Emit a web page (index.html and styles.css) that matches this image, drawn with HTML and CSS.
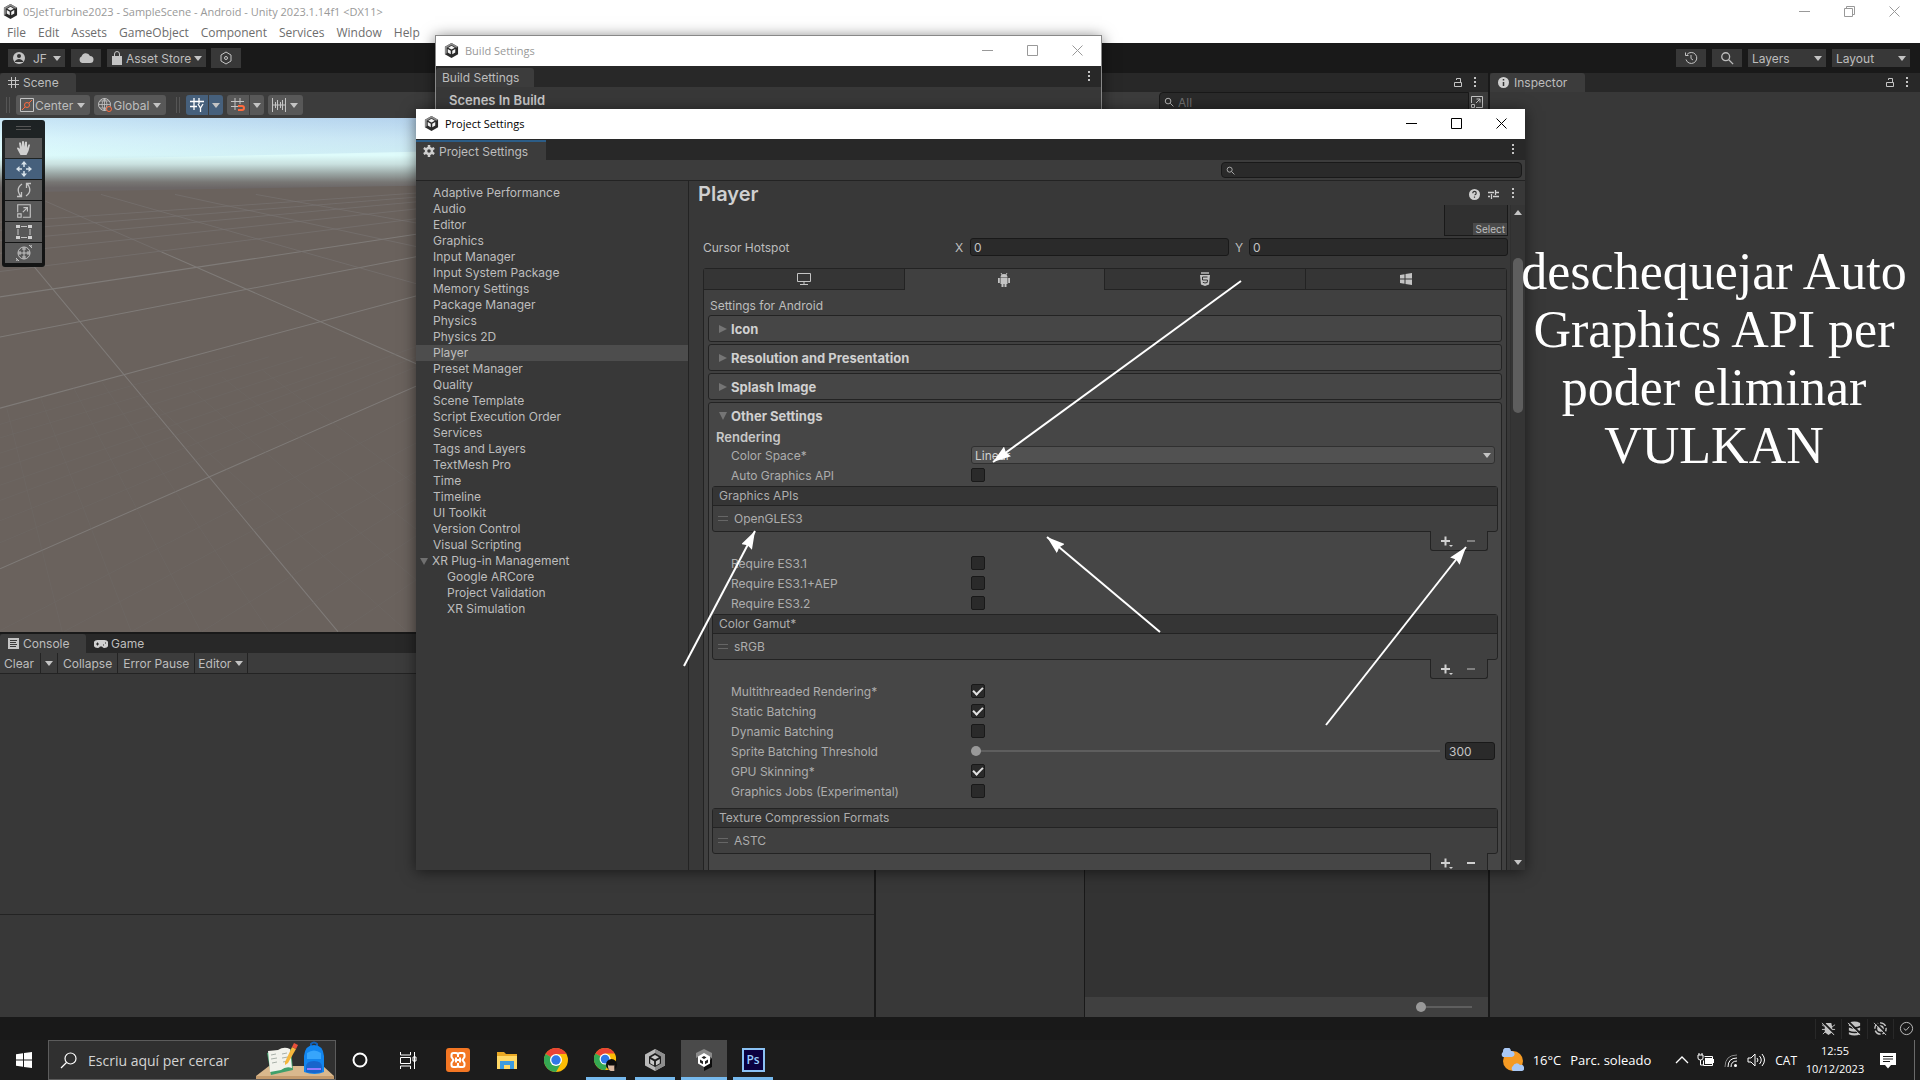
FILE: index.html
```html
<!DOCTYPE html>
<html lang="ca">

<head>
	<meta charset="UTF-8">
	<meta name="viewport" content="width=device-width, initial-scale=1.0">
	<title>05JetTurbine2023 - SampleScene - Android - Unity</title>
	<link rel="stylesheet" href="styles.css">
</head>

<body>

	<!-- Shared icons -->
	<svg class="sprite" aria-hidden="true">
		<symbol id="i-unity" viewBox="0 0 16 16">
			<path d="M8 0l7 4v8l-7 4-7-4V4z" fill="#2a2a2a" />
			<path d="M8 0l7 4-2 1-5-3-5 3v6l-2 1V4z" fill="#8b8b8b" />
			<path d="M8 3l3.5 2L8 7 4.500 5zM4 6.500l3.200 1.800v3.700L4 10zM12 6.500L8.800 8.300v3.700L12 10z" fill="#f4f4f4" />
		</symbol>
		<symbol id="i-cube" viewBox="0 0 24 24">
			<path d="M12 1l10 5.500v11L12 23 2 17.500v-11z" fill="#b9b9b9" />
			<path d="M12 1l10 5.500v11L12 23z" fill="#8d8d8d" />
			<path d="M12 5l6 3.500v7L12 19l-6-3.500v-7z" fill="#1c1c1c" />
			<path d="M12 7l4 2.300-4 2.300-4-2.300zM7.200 11l3.900 2.200v4.300l-3.900-2.200zM16.800 11l-3.900 2.200v4.300l3.900-2.200z" fill="#c9c9c9" />
		</symbol>
		<symbol id="i-cube-light" viewBox="0 0 24 24">
			<path d="M12 1l8 4v5l-8-4-8 4V5z" fill="#8a8a8a" />
			<path d="M20 10v9l-8 4v-4z" fill="#0d0d0d" />
			<path d="M12 5l6 3.500v7L12 19l-6-3.500v-7z" fill="#fff" />
			<path d="M12 8l2.500 1.500L12 11 9.500 9.500zM8 11.500l3 1.700v3L8 14.500zM16 11.500l-3 1.700v3l3-1.700z" fill="#222" />
		</symbol>
		<symbol id="i-dots" viewBox="0 0 4 12">
			<path d="M1 0h2v2H1zM1 4h2v2H1zM1 8h2v2H1z" fill="#c4c4c4" />
		</symbol>
		<symbol id="i-lock" viewBox="0 0 10 12">
			<path d="M1.500 5.500h7v4h-7zM7.500 5V1.500h-4V3" fill="none" stroke="#c4c4c4" />
		</symbol>
		<symbol id="i-search" viewBox="0 0 16 16">
			<path d="M11 6.500a4.500 4.500 0 1 1-9 0 4.500 4.500 0 0 1 9 0zM10 10l5 5" fill="none" stroke="currentColor" stroke-width="1.500" />
		</symbol>
		<symbol id="i-open" viewBox="0 0 14 14">
			<path d="M1.500 8V1.500h11v11H6M1.500 9.500h3v3h-3zM6 8l4-4M6.500 4H10v3.500" fill="none" stroke="#c4c4c4" />
		</symbol>
		<symbol id="i-add" viewBox="0 0 14 14">
			<path d="M2 7h9M6.500 2.500v9" stroke="#d0d0d0" stroke-width="2" />
			<path d="M10 11h4l-2 2z" fill="#d0d0d0" />
		</symbol>
		<symbol id="i-chrome" viewBox="0 0 24 24">
			<circle cx="12" cy="12" r="12" fill="#fbbc05" />
			<path d="M12 12L1.600 6A12 12 0 0 1 22.400 6H12z" fill="#ea4335" />
			<path d="M1.600 6A12 12 0 0 0 12 24l5.200-9L12 12z" fill="#34a853" />
			<circle cx="12" cy="12" r="6" fill="#fff" />
			<circle cx="12" cy="12" r="4.700" fill="#3078e8" />
		</symbol>
		<symbol id="i-min" viewBox="0 0 11 11">
			<path d="M0 5.500h11" fill="none" stroke="currentColor" />
		</symbol>
		<symbol id="i-max" viewBox="0 0 11 11">
			<path d="M.5 .5h10v10H.5z" fill="none" stroke="currentColor" />
		</symbol>
		<symbol id="i-restore" viewBox="0 0 11 11">
			<path d="M.5 2.500h8v8h-8zM2.500 2.500v-2h8v8h-2" fill="none" stroke="currentColor" />
		</symbol>
		<symbol id="i-close" viewBox="0 0 11 11">
			<path d="M.5 .5l10 10M10.500 .5l-10 10" fill="none" stroke="currentColor" />
		</symbol>
	</svg>

	<div class="desktop">

		<header class="app-title">
			<svg class="icon-16"><use href="#i-unity" /></svg>
			<span class="grow">05JetTurbine2023 - SampleScene - Android - Unity 2023.1.14f1 &lt;DX11&gt;</span>
			<div class="win-buttons">
				<button aria-label="Minimize"><svg><use href="#i-min" /></svg></button>
				<button aria-label="Restore"><svg><use href="#i-restore" /></svg></button>
				<button aria-label="Close"><svg><use href="#i-close" /></svg></button>
			</div>
		</header>
		<nav class="app-menu">
			<button>File</button>
			<button>Edit</button>
			<button>Assets</button>
			<button>GameObject</button>
			<button>Component</button>
			<button>Services</button>
			<button>Window</button>
			<button>Help</button>
		</nav>

		<div class="main-toolbar">
			<button class="tool"><svg class="icon-14" viewBox="0 0 14 14"><circle cx="7" cy="7" r="6" fill="#c4c4c4" /><circle cx="7" cy="5" r="2" fill="#333" /><path d="M3 10q4-4 8 0v1H3z" fill="#333" /></svg><span class="account">JF</span><i class="caret"></i></button>
			<button class="tool cloud" aria-label="Cloud"><svg width="16" height="12" viewBox="0 0 16 12"><path d="M4 11a3.500 3.500 0 0 1-.5-6.500A4.500 4.500 0 0 1 12 4a3.500 3.500 0 0 1 0 7z" fill="#c4c4c4" /></svg></button>
			<button class="tool store"><svg width="12" height="14" viewBox="0 0 12 14"><path d="M1 5h10v9H1z" fill="#c4c4c4" /><path d="M3.500 6V3a2.500 2.500 0 0 1 5 0v3" fill="none" stroke="#c4c4c4" /></svg>Asset Store<i class="caret"></i></button>
			<button class="tool version" aria-label="Version control"><svg class="icon-14" viewBox="0 0 14 14"><path d="M7 1l5 3v6l-5 3-5-3V4z" fill="none" stroke="#c4c4c4" /><circle cx="7" cy="7" r="1.500" fill="none" stroke="#c4c4c4" /></svg></button>
			<span class="grow"></span>
			<button class="tool square" aria-label="Undo history"><svg class="icon-14" viewBox="0 0 14 14"><path d="M3 3.500a5.500 5.500 0 1 1-1 5M1.500 1.500v3h3M7 4v3.500l2 1.500" fill="none" stroke="#c4c4c4" /></svg></button>
			<button class="tool square" aria-label="Search"><svg class="icon-14"><use href="#i-search" /></svg></button>
			<span class="pick"><select aria-label="Layers"><option>Layers</option></select></span>
			<span class="pick"><select aria-label="Layout"><option>Layout</option></select></span>
		</div>

		<main class="docks">
			<div class="left-docks">
				<section class="dock scene">
					<div class="tabstrip">
						<button class="tab tab-scene"><svg width="11" height="11" viewBox="0 0 11 11"><path d="M3.500 0v11M7.500 0v11M0 3.500h11M0 7.500h11" fill="none" stroke="#c4c4c4" /></svg>Scene</button>
						<span class="grow"></span>
						<svg class="lock"><use href="#i-lock" /></svg>
						<svg class="dots"><use href="#i-dots" /></svg>
					</div>
					<div class="scene-tools">
						<i class="grip"></i>
						<button class="chip"><svg class="icon-14" viewBox="0 0 14 14"><path d="M.5 .5h13v13H.5z" fill="none" stroke="#c4c4c4" /><circle cx="7" cy="7" r="2.500" fill="none" stroke="#ff6b3d" /><path d="M9 5l3-3M5 9l-3 3" stroke="#ff6b3d" /></svg>Center<i class="caret"></i></button>
						<button class="chip"><svg class="icon-14" viewBox="0 0 14 14"><circle cx="6.500" cy="6.500" r="6" fill="none" stroke="#c4c4c4" /><path d="M6.500 .5v12M.5 6.500h12M2 3h9M2 10h6M6.500 .5q-5 6 0 12M6.500 .5q5 6 0 12" fill="none" stroke="#c4c4c4" stroke-width=".8" /><circle cx="11" cy="11" r="2.500" fill="#585858" stroke="#ff6b3d" /></svg>Global<i class="caret"></i></button>
						<i class="grip second"></i>
						<span class="split on">
							<button aria-label="Grid"><svg class="icon-14" viewBox="0 0 14 14"><path d="M4 0v12M9 0v6M0 3.500h14M0 8.500h7M8 6l2.500 4L13 6M10.500 10v4" fill="none" stroke="#fff" stroke-width="1.300" /></svg></button>
							<button aria-label="Grid options"><i class="caret"></i></button>
						</span>
						<span class="split">
							<button aria-label="Snap"><svg class="icon-14" viewBox="0 0 14 14"><path d="M4 0v12M9 0v6M0 3.500h13M0 8.500h7" fill="none" stroke="#c4c4c4" /><path d="M7 8h4a2 2 0 0 1 0 4H7" fill="none" stroke="#ff6b3d" stroke-width="2" /></svg></button>
							<button aria-label="Snap options"><i class="caret"></i></button>
						</span>
						<button class="chip ruler" aria-label="Increment"><svg class="icon-14" viewBox="0 0 14 14"><path d="M.5 0v14M13.500 0v14M3.500 4v6M5.500 2v10M8.500 4v6M10.500 2v10M0 7h14" fill="none" stroke="#c4c4c4" /></svg><i class="caret"></i></button>
						<span class="grow"></span>
						<label class="scene-search"><svg width="10" height="10"><use href="#i-search" /></svg><input type="text" placeholder="All" aria-label="Search scene"></label>
						<button class="open-search" aria-label="Open in search"><svg class="icon-14"><use href="#i-open" /></svg></button>
					</div>
					<div class="viewport">
						<svg class="ground" viewBox="0 24 1236 1520" preserveAspectRatio="none">
							<defs>
								<linearGradient id="sky" x1="0" y1="0" x2="0" y2="1">
									<stop offset="0" stop-color="#c0dcf3" />
									<stop offset=".28" stop-color="#d9f3fb" />
									<stop offset=".5" stop-color="#dffcfb" />
									<stop offset=".62" stop-color="#c9e0df" />
									<stop offset=".74" stop-color="#9daaa8" />
									<stop offset=".86" stop-color="#787775" />
									<stop offset=".94" stop-color="#6b6666" />
								</linearGradient>
								<linearGradient id="glow" x1="0" y1="0" x2="1" y2="0">
									<stop offset="0" stop-color="#dff" stop-opacity=".3" />
									<stop offset="1" stop-color="#8ab0d8" stop-opacity=".2" />
								</linearGradient>
							</defs>
							<rect y="24" width="1236" height="1520" fill="#6a625d" />
							<path d="M0 24h1236v200L0 244z" fill="url(#sky)" />
							<path d="M0 24h1236v100L0 150z" fill="url(#glow)" />
							<g fill="none" stroke="#777371" stroke-width="2">
								<path d="M0 1357L1236 817M0 882L1236 550M0 672L1236 434M0 553L1236 368" stroke="#7f7b78" stroke-width="3" />
								<path d="M100 462L1004 1543M480 420L1240 752" stroke="#7f7b78" stroke-width="3" />
								<path d="M0 478L1236 322M0 424L1236 293M0 386L1236 272M0 356L1236 258M0 332L1236 246" />
								<path d="M135 270L480 420M300 250L900 420L1240 515M520 250L1240 405M760 250L1240 335" />
							</g>
							<g fill="none" stroke="#706b68" stroke-width="2" opacity=".6">
								<path d="M20 882L185 1543M120 850L390 1543M215 815L597 1543M300 800L800 1543M470 880L1210 1543M560 820L1236 1390M660 790L1236 1240M780 770L1236 1110" />
								<path d="M0 1540L1236 900M190 1543L1236 985M390 1543L1236 1070M600 1543L1236 1150M800 1543L1236 1260M1010 1543L1236 1390" />
								<path d="M0 1280L1236 760M0 1215L1236 730M0 1155L1236 700M0 1110L1100 730M0 1060L1000 730M0 1015L900 730M0 970L800 730M0 930L700 725" />
							</g>
						</svg>
						<div class="tool-palette">
							<i class="handle"></i>
							<button aria-label="View"><svg viewBox="0 0 16 16"><path d="M4.500 15L1 8.500q0-1.500 2-.5l1 1L3 3q1-1.500 2 0l1 4V1.500q1-1 2 0V7l1-5q1-1 2 0v6l1.500-3.500q1-.8 1.500 .5l-1.500 6-2 4z" fill="#d0d0d0" /></svg></button>
							<button class="active" aria-label="Move"><svg viewBox="0 0 16 16"><path d="M8 0l3 3.500H5zM8 16l3-3.500H5zM0 8l3.500-3v6zM16 8l-3.500-3v6z" fill="#d8e2ea" /><path d="M8 3v3M8 10v3M3 8h3M10 8h3" stroke="#d8e2ea" stroke-width="1.500" /></svg></button>
							<button aria-label="Rotate"><svg viewBox="0 0 16 16"><path d="M6 2Q0 6 3.500 12.500L5 14M1 14.500h4.500V10M10 14q6-4 2.500-10.500L11 2M15 1.500h-4.500V6" fill="none" stroke="#c4c4c4" stroke-width="1.300" /></svg></button>
							<button aria-label="Scale"><svg viewBox="0 0 14 14"><use href="#i-open" /></svg></button>
							<button aria-label="Rect"><svg viewBox="0 0 16 16"><path d="M0 1h4v3H0zM12 1h4v3h-4zM0 12h4v3H0zM12 12h4v3h-4z" fill="#d0d0d0" /><path d="M5 2.500h6M5 13.500h6M2 5v6M14 5v6" stroke="#c4c4c4" /></svg></button>
							<button aria-label="Transform"><svg viewBox="0 0 16 16"><circle cx="8" cy="8" r="6" fill="none" stroke="#c4c4c4" /><path d="M8 2v12M2 8h12M6 4h4M6 12h4M4 6v4M12 6v4M13 0h3v3zM0 13v3h3z" fill="none" stroke="#c4c4c4" /></svg></button>
						</div>
					</div>
				</section>

				<div class="bottom-docks">
					<section class="dock console">
						<div class="tabstrip">
							<button class="tab tab-console"><svg width="11" height="11" viewBox="0 0 11 11"><path d="M0 0h11v11H0z" fill="#c4c4c4" /><path d="M2 2.500h7M2 4.500h6M2 6.500h7M2 8.500h6" stroke="#383838" /></svg>Console</button>
							<button class="tab tab-game"><svg width="14" height="8" viewBox="0 0 14 8"><path d="M3.500 0h7a4 4 0 0 1 0 8Q9 8 8 6.500H6Q5 8 3.500 8a4 4 0 0 1 0-8z" fill="#d0d0d0" /><path d="M2 4h3M3.500 2.500v3M9 5h1M11 3h1" stroke="#282828" /></svg>Game</button>
						</div>
						<div class="console-tools">
							<button class="clear">Clear</button>
							<button class="clear-menu" aria-label="Clear options"><i class="caret"></i></button>
							<button class="collapse">Collapse</button>
							<button class="pause">Error Pause</button>
							<button class="attach">Editor<i class="caret"></i></button>
						</div>
						<div class="log"></div>
						<div class="log-detail"></div>
					</section>
					<section class="dock project-tree"></section>
					<section class="dock project-grid">
						<div class="grow"></div>
						<footer><input type="range" class="slider zoom" min="0" max="100" value="0" aria-label="Icon size"></footer>
					</section>
				</div>
			</div>

			<aside class="dock inspector">
				<div class="tabstrip">
					<button class="tab tab-inspector"><svg width="11" height="11" viewBox="0 0 11 11"><circle cx="5.500" cy="5.500" r="5.500" fill="#d0d0d0" /><path d="M5.500 2v1.500M5.500 5v4" stroke="#333" stroke-width="1.500" /></svg>Inspector</button>
					<span class="grow"></span>
					<svg class="lock"><use href="#i-lock" /></svg>
					<svg class="dots"><use href="#i-dots" /></svg>
				</div>
			</aside>
		</main>

		<div class="status-bar">
			<button aria-label="Debugger"><svg viewBox="0 0 16 16"><path d="M5 2h6l1 5v5l-4 3-4-3V7z" fill="#c4c4c4" /><path d="M1 4l3 2M15 4l-3 2M1 9h14M2 14l3-3M14 14l-3-3" stroke="#c4c4c4" /><path d="M2 1l13 13" stroke="#191919" stroke-width="2" /><path d="M1 2l13 13" stroke="#c4c4c4" /></svg></button>
			<button aria-label="Cache server"><svg viewBox="0 0 16 16"><path d="M2 2q6-3 12 0v3Q8 8 2 5zM2 7q6 3 12 0v3q-6 3-12 0zM2 12q6 2 12 0v2q-6 3-12 0z" fill="#c4c4c4" /><path d="M2 1l13 13" stroke="#191919" stroke-width="2" /><path d="M1 2l13 13" stroke="#c4c4c4" /></svg></button>
			<button aria-label="Auto refresh"><svg viewBox="0 0 16 16"><circle cx="8" cy="8" r="6" fill="none" stroke="#c4c4c4" stroke-width="1.500" stroke-dasharray="7 2" /><circle cx="8" cy="8" r="3.500" fill="#c4c4c4" /><path d="M2 1l13 13" stroke="#191919" stroke-width="2" /><path d="M1 2l13 13" stroke="#c4c4c4" /></svg></button>
			<button aria-label="Activity"><svg viewBox="0 0 16 16"><circle cx="8" cy="8" r="6.500" fill="none" stroke="#c4c4c4" /><path d="M5 8l2.500 2L11 6" fill="none" stroke="#c4c4c4" /></svg></button>
		</div>

		<footer class="taskbar">
			<button class="start" aria-label="Start"><svg width="16" height="16" viewBox="0 0 16 16"><path d="M0 2.200l7-1V7.500H0zM8 1l8-1v7.500H8zM0 8.500h7v6.300l-7-1zM8 8.500h8V16l-8-1z" fill="#fff" /></svg></button>
			<label class="task-search">
				<svg width="17" height="17" viewBox="0 0 17 17"><circle cx="10.500" cy="6.500" r="5.500" fill="none" stroke="#fff" stroke-width="1.200" /><path d="M6.500 10.500L1 16" stroke="#fff" stroke-width="1.200" /></svg>
				<input type="text" placeholder="Escriu aquí per cercar">
				<svg class="search-art" width="80" height="38" viewBox="0 0 80 38">
					<path d="M14 25h54l11 10H1z" fill="#d9b88d" /><path d="M1 35h78v3H1z" fill="#c39a6c" />
					<path d="M12 12l24-4 2 21-22 5z" fill="#3fa06b" />
					<path d="M13 10l10-1 3 20-11 2zM23 9q6-4 12-1l2 19q-6-2-11 2z" fill="#f2f2ec" />
					<path d="M16 14l5-1M16 18l6-1M17 22l5-1M27 13l5-1M27 17l6-1M28 21l5-1" stroke="#a9b0a9" />
					<path d="M30 21l7-15 4 2-8 14-3 2z" fill="#f6b73c" /><path d="M37 6l2-4 4 2-2 4z" fill="#e8503a" />
					<path d="M56 6V3q3-3 6 0v3" fill="none" stroke="#1461b8" stroke-width="2" />
					<path d="M49 15Q50 4 59 4t10 11v16q-9 4-20 0z" fill="#1285ee" />
					<path d="M52 12q7-5 14 0v6H52z" fill="#37a5fb" /><path d="M51 26q0-6 8-6t8 6v5q-8 2-16 0z" fill="#1765cc" /><path d="M52 28h14" stroke="#8f7bff" stroke-width="2" />
				</svg>
			</label>
			<button class="task" aria-label="Cortana"><svg viewBox="0 0 24 24"><circle cx="12" cy="12" r="6.500" fill="none" stroke="#fff" stroke-width="2" /></svg></button>
			<button class="task" aria-label="Task view"><svg viewBox="0 0 24 24"><path d="M3.500 4v3h10V4M3.500 9.500h10v6h-10zM3.500 21v-3h10v3M17.500 4v17M16 9h3v4h-3z" fill="none" stroke="#fff" /></svg></button>
			<button class="task" aria-label="XAMPP"><svg viewBox="0 0 24 24"><rect width="24" height="24" rx="3" fill="#f37623" /><path d="M12 9V7a2 2 0 0 0-2-2H7.500a2 2 0 0 0-2 2v2l2 3-2 3v2a2 2 0 0 0 2 2H10a2 2 0 0 0 2-2v-2M12 9V7a2 2 0 0 1 2-2h2.500a2 2 0 0 1 2 2v2l-2 3 2 3v2a2 2 0 0 1-2 2H14a2 2 0 0 1-2-2v-2M9 12h6M10 9.500v5M14 9.500v5" fill="none" stroke="#fff" stroke-width="2" /></svg></button>
			<button class="task" aria-label="File Explorer"><svg viewBox="0 0 24 24"><path d="M2 4h7l2 2h11v15H2z" fill="#e9a824" /><path d="M2 8h20v13H2z" fill="#ffd866" /><path d="M5 21v-8h14v8h-4v-4H9v4z" fill="#3d9be0" /></svg></button>
			<button class="task" aria-label="Chrome"><svg><use href="#i-chrome" /></svg></button>
			<button class="task running" aria-label="Chrome profile"><svg viewBox="0 0 26 26"><use href="#i-chrome" width="24" height="24" /><circle cx="19" cy="18" r="6" fill="#0c0c0c" /><path d="M15 18h7v7h-4q-3-1-3-7z" fill="#d9b7a0" /><path d="M14 15h10l-2 4h-6z" fill="#0c0c0c" /></svg></button>
			<button class="task running" aria-label="Unity Hub"><svg><use href="#i-cube" /></svg></button>
			<button class="task running active" aria-label="Unity"><svg><use href="#i-cube-light" /></svg></button>
			<button class="task running" aria-label="Photoshop"><span class="ps">Ps</span></button>
			<span class="grow"></span>
			<button class="weather">
				<svg width="24" height="24" viewBox="0 0 24 24"><circle cx="13" cy="13" r="10" fill="#f59a23" /><path d="M3 9a3 3 0 0 1 0-5 4 4 0 0 1 8-1 3 3 0 0 1 1 6z" fill="#a9c8f5" /><path d="M13 23a3 3 0 0 1 0-5 4 4 0 0 1 7-1 3 3 0 0 1 2 6z" fill="#a9c8f5" /></svg>
				<span>16°C</span><span>Parc. soleado</span>
			</button>
			<div class="tray">
				<svg width="14" height="16" viewBox="0 0 14 16"><path d="M1 11l6-6 6 6" fill="none" stroke="#fff" stroke-width="1.300" /></svg>
				<svg width="18" height="16" viewBox="0 0 18 16"><path d="M1 3h5v3q0 2-2.500 2T1 6zM2 1v2M5 1v2M3.500 8v5H6" fill="none" stroke="#fff" /><path d="M8 6h7v6H8zM16 7h1v4h-1z" fill="#fff" /><path d="M7.500 4.500h8v9h-9v-5" fill="none" stroke="#fff" /></svg>
				<svg width="16" height="16" viewBox="0 0 16 16"><path d="M2 15Q2 3 14 3" fill="none" stroke="#888" /><path d="M5 15q0-9 9-9M8 15q0-6 6-6" fill="none" stroke="#fff" /><circle cx="12.500" cy="13.500" r="1.500" fill="#fff" /></svg>
				<svg width="18" height="16" viewBox="0 0 18 16"><path d="M1 6h3l4-4v12l-4-4H1zM10 6q2 2 0 4M12.500 4q3.500 4 0 8M15 2q5 6 0 12" fill="none" stroke="#fff" /></svg>
				<span class="lang">CAT</span>
			</div>
			<div class="clock"><span>12:55</span><span>10/12/2023</span></div>
			<button class="notify" aria-label="Notifications"><svg width="16" height="17" viewBox="0 0 16 17"><path d="M0 1h16v12h-5l-3 3.500L5 13H0z" fill="#fff" /><path d="M3 4.500h10M3 7h10M3 9.500h7" stroke="#1c1c1c" /></svg></button>
		</footer>

		<!-- Build Settings window -->
		<section class="window build-window">
			<header class="titlebar inactive">
				<svg class="icon-16"><use href="#i-unity" /></svg>
				<span class="grow">Build Settings</span>
				<div class="win-buttons">
					<button aria-label="Minimize"><svg><use href="#i-min" /></svg></button>
					<button aria-label="Maximize"><svg><use href="#i-max" /></svg></button>
					<button aria-label="Close"><svg><use href="#i-close" /></svg></button>
				</div>
			</header>
			<div class="tabstrip">
				<button class="tab tab-build">Build Settings</button>
				<span class="grow"></span>
				<svg class="dots"><use href="#i-dots" /></svg>
			</div>
			<h2>Scenes In Build</h2>
		</section>

		<!-- Project Settings window -->
		<section class="window project-window">
			<header class="titlebar">
				<svg class="icon-16"><use href="#i-unity" /></svg>
				<span class="grow">Project Settings</span>
				<div class="win-buttons">
					<button aria-label="Minimize"><svg><use href="#i-min" /></svg></button>
					<button aria-label="Maximize"><svg><use href="#i-max" /></svg></button>
					<button aria-label="Close"><svg><use href="#i-close" /></svg></button>
				</div>
			</header>
			<div class="tabstrip">
				<button class="tab tab-project"><svg width="12" height="12" viewBox="0 0 12 12"><circle cx="6" cy="6" r="3" fill="none" stroke="#d0d0d0" stroke-width="2.500" /><path d="M6 0v2.500M6 9.500V12M.8 3L3 4.300M9 7.700L11.200 9M.8 9L3 7.700M9 4.300L11.200 3" stroke="#d0d0d0" stroke-width="2.500" /></svg>Project Settings</button>
				<span class="grow"></span>
				<svg class="dots"><use href="#i-dots" /></svg>
			</div>
			<div class="settings-search">
				<label><svg width="9" height="9"><use href="#i-search" /></svg><input type="text" aria-label="Search settings"></label>
			</div>
			<div class="settings-body">
				<nav class="categories">
					<a href="#">Adaptive Performance</a>
					<a href="#">Audio</a>
					<a href="#">Editor</a>
					<a href="#">Graphics</a>
					<a href="#">Input Manager</a>
					<a href="#">Input System Package</a>
					<a href="#">Memory Settings</a>
					<a href="#">Package Manager</a>
					<a href="#">Physics</a>
					<a href="#">Physics 2D</a>
					<a href="#" class="selected">Player</a>
					<a href="#">Preset Manager</a>
					<a href="#">Quality</a>
					<a href="#">Scene Template</a>
					<a href="#">Script Execution Order</a>
					<a href="#">Services</a>
					<a href="#">Tags and Layers</a>
					<a href="#">TextMesh Pro</a>
					<a href="#">Time</a>
					<a href="#">Timeline</a>
					<a href="#">UI Toolkit</a>
					<a href="#">Version Control</a>
					<a href="#">Visual Scripting</a>
					<a href="#" class="parent">XR Plug-in Management</a>
					<a href="#" class="child">Google ARCore</a>
					<a href="#" class="child">Project Validation</a>
					<a href="#" class="child">XR Simulation</a>
				</nav>

				<div class="player">
					<header class="player-head">
						<h1>Player</h1>
						<svg width="11" height="11" viewBox="0 0 11 11"><circle cx="5.500" cy="5.500" r="5.500" fill="#d0d0d0" /><path d="M3.800 4.200q0-1.800 1.700-1.800t1.700 1.600-1.700 2M5.500 7.500v1.300" fill="none" stroke="#333" stroke-width="1.200" /></svg>
						<svg width="11" height="11" viewBox="0 0 11 11"><path d="M0 3.500h6M8 3.500h3M7.500 1v5M0 7.500h2M5 7.500h6M3.500 5v5" fill="none" stroke="#d0d0d0" stroke-width="1.300" /></svg>
						<svg class="dots"><use href="#i-dots" /></svg>
					</header>
					<div class="scroller">
						<div class="content">
							<div class="texture"><button>Select</button></div>
							<div class="hotspot">
								<span>Cursor Hotspot</span>
								<label for="hot-x">X</label><input id="hot-x" type="text" class="field" value="0">
								<label for="hot-y">Y</label><input id="hot-y" type="text" class="field" value="0">
							</div>

							<div class="platforms">
								<div class="platform-tabs">
									<button aria-label="Desktop"><svg width="14" height="12" viewBox="0 0 14 12"><path d="M.5 .5h13v8H.5zM7 9v2M3 11.500h8" fill="none" stroke="#c4c4c4" /></svg></button>
									<button class="current" aria-label="Android"><svg width="12" height="14" viewBox="0 0 12 14"><path d="M2.500 4.500a3.500 3.500 0 0 1 7 0zM2.500 5h7v6h-7zM0 5h1.800v5H0zM10.200 5H12v5h-1.800zM3.500 11h2v3h-2zM6.500 11h2v3h-2z" fill="#c4c4c4" /><path d="M3 0l1.200 2M9 0L7.800 2" stroke="#c4c4c4" /></svg></button>
									<button aria-label="WebGL"><svg width="10" height="14" viewBox="0 0 10 14"><path d="M1 0h8v2H1z" fill="#999" /><path d="M0 3h10l-1 9.500L5 14l-4-1.500z" fill="#c4c4c4" /><path d="M7.500 5h-5v3h5l-.3 2.500L5 11l-2.200-.7" fill="none" stroke="#333" /></svg></button>
									<button aria-label="Windows"><svg width="12" height="12" viewBox="0 0 12 12"><path d="M0 2l4.500-.8v4.300H0zM5.500 1L12 0v5.500H5.500zM0 6.500h4.500v4.300L0 10zM5.500 6.500H12V12l-6.500-1z" fill="#c4c4c4" /></svg></button>
								</div>
								<p class="platform-title">Settings for Android</p>

								<button class="foldout"><i class="arrow"></i>Icon</button>
								<button class="foldout"><i class="arrow"></i>Resolution and Presentation</button>
								<button class="foldout"><i class="arrow"></i>Splash Image</button>

								<div class="foldout-open">
									<button class="foldout-head"><i class="arrow down"></i>Other Settings</button>
									<h3>Rendering</h3>
									<div class="row"><label for="space">Color Space*</label><span class="pick wide"><select id="space"><option>Linear</option></select></span></div>
									<div class="row"><label for="auto">Auto Graphics API</label><input id="auto" type="checkbox"></div>

									<div class="list">
										<h4>Graphics APIs</h4>
										<div class="item"><i class="drag"></i>OpenGLES3</div>
									</div>
									<div class="list-footer">
										<button aria-label="Add"><svg class="icon-14"><use href="#i-add" /></svg></button>
										<button aria-label="Remove" disabled><i class="minus"></i></button>
									</div>

									<div class="row"><label for="es31">Require ES3.1</label><input id="es31" type="checkbox"></div>
									<div class="row"><label for="aep">Require ES3.1+AEP</label><input id="aep" type="checkbox"></div>
									<div class="row"><label for="es32">Require ES3.2</label><input id="es32" type="checkbox"></div>

									<div class="list">
										<h4>Color Gamut*</h4>
										<div class="item"><i class="drag"></i>sRGB</div>
									</div>
									<div class="list-footer">
										<button aria-label="Add"><svg class="icon-14"><use href="#i-add" /></svg></button>
										<button aria-label="Remove" disabled><i class="minus"></i></button>
									</div>

									<div class="row"><label for="multi">Multithreaded Rendering*</label><input id="multi" type="checkbox" checked></div>
									<div class="row"><label for="static">Static Batching</label><input id="static" type="checkbox" checked></div>
									<div class="row"><label for="dynamic">Dynamic Batching</label><input id="dynamic" type="checkbox"></div>
									<div class="row"><label for="sprite">Sprite Batching Threshold</label><input id="sprite" type="range" class="slider" min="300" max="8000" value="300"><input type="text" class="field number" value="300" aria-label="Threshold value"></div>
									<div class="row"><label for="gpu">GPU Skinning*</label><input id="gpu" type="checkbox" checked></div>
									<div class="row"><label for="jobs">Graphics Jobs (Experimental)</label><input id="jobs" type="checkbox"></div>

									<div class="list spaced">
										<h4>Texture Compression Formats</h4>
										<div class="item"><i class="drag"></i>ASTC</div>
									</div>
									<div class="list-footer">
										<button aria-label="Add"><svg class="icon-14"><use href="#i-add" /></svg></button>
										<button aria-label="Remove"><i class="minus"></i></button>
									</div>
								</div>
							</div>
						</div>
						<div class="scrollbar"><i class="up"></i><div class="track"><i class="thumb"></i></div><i class="end"></i></div>
					</div>
				</div>
			</div>
		</section>

		<!-- Annotations drawn over the desktop -->
		<svg class="arrows" aria-hidden="true">
			<defs>
				<marker id="head" viewBox="0 0 18 12" refX="18" refY="6" markerWidth="18" markerHeight="12" markerUnits="userSpaceOnUse" orient="auto">
					<path d="M18 6L0 12l2-6L0 0z" fill="#fff" />
				</marker>
			</defs>
			<g stroke="#fff" stroke-width="2" marker-end="url(#head)">
				<path d="M1241 281L993 462" />
				<path d="M684 666L755 531" />
				<path d="M1160 632L1047 537" />
				<path d="M1326 725L1466 547" />
			</g>
		</svg>
		<p class="caption">deschequejar Auto<br>Graphics API per<br>poder eliminar<br>VULKAN</p>

	</div>

</body>

</html>
```

FILE: styles.css
```css
* {
	box-sizing: border-box;
}

body {
	margin: 0;
	background-color: #191919;
	color: #bdbdbd;
	font-family: Inter, 'Liberation Sans', sans-serif;
	font-size: 12px;
}

button,
input,
select {
	margin: 0;
	padding: 0;
	border: 0;
	background: none;
	color: inherit;
	font: inherit;
}

button {
	display: flex;
	align-items: center;
	white-space: nowrap;
}

input {
	min-width: 0;
	outline: none;
}

h1,
h2,
h3,
h4,
p {
	margin: 0;
}

a {
	color: inherit;
	text-decoration: none;
}

svg {
	display: block;
	flex-shrink: 0;
}

.sprite {
	position: absolute;
	width: 0;
	height: 0;
}

.grow {
	flex: 1;
}

.icon-14 {
	width: 14px;
	height: 14px;
}

.icon-16 {
	width: 15px;
	height: 15px;
}

.caret {
	flex-shrink: 0;
	border: 4px solid transparent;
	border-top: 5px solid #c4c4c4;
	border-bottom: 0;
}

.desktop {
	position: relative;
	display: flex;
	flex-direction: column;
	height: 100vh;
	overflow: hidden;
}

/* Main window title and menu */
.app-title,
.app-menu,
.titlebar {
	background-color: #fff;
	font-family: 'Open Sans', 'Noto Sans', sans-serif;
}

.app-title {
	display: flex;
	align-items: center;
	gap: 5px;
	height: 22px;
	padding: 0 3px;
	color: #999;
	font-size: 11px;
}

.win-buttons {
	display: flex;
	color: #999;
}

.win-buttons button {
	justify-content: center;
	width: 45px;
	height: 20px;
}

.win-buttons svg {
	width: 11px;
	height: 11px;
}

.app-menu {
	display: flex;
	gap: 12px;
	height: 21px;
	padding-left: 7px;
	color: #6d6d6d;
	font-size: 12px;
}

/* Toolbar */
.main-toolbar {
	display: flex;
	align-items: center;
	height: 30px;
	padding: 0 10px 0 8px;
	background-color: #191919;
}

.tool {
	height: 18px;
	padding: 0 4px;
	background-color: #383838;
	margin-right: 6px;
}

.account {
	margin: 0 6px 0 7px;
}

.cloud {
	justify-content: center;
	width: 30px;
}

.store {
	gap: 3px;
	margin-right: 5px;
}

.version {
	justify-content: center;
	width: 30px;
	height: 20px;
}

.square {
	justify-content: center;
	width: 30px;
	margin-right: 6px;
}

.pick {
	position: relative;
	width: 78px;
	margin-left: 6px;
}

.square + .pick {
	margin-left: 0;
}

.pick select {
	width: 100%;
	height: 18px;
	padding: 0 4px;
	background-color: #383838;
	appearance: none;
}

.pick::after {
	content: '';
	position: absolute;
	top: 7px;
	right: 4px;
	border: 4px solid transparent;
	border-top: 5px solid #c4c4c4;
	border-bottom: 0;
}

/* Docks */
.docks {
	display: grid;
	grid-template-columns: 1fr 430px;
	gap: 2px;
	flex: 1;
	min-height: 0;
}

.left-docks {
	display: grid;
	grid-template-rows: 1fr 383px;
	gap: 2px;
	min-width: 0;
	min-height: 0;
}

.bottom-docks {
	display: grid;
	grid-template-columns: 875fr 207fr 403fr;
	gap: 2px;
}

.dock {
	display: flex;
	flex-direction: column;
	min-width: 0;
	min-height: 0;
	background-color: #383838;
}

.tabstrip {
	display: flex;
	align-items: center;
	flex-shrink: 0;
	height: 19px;
	padding-right: 11px;
	background-color: #282828;
}

.tab {
	gap: 4px;
	height: 100%;
	padding: 0 8px;
	background-color: #3c3c3c;
	border-radius: 3px 3px 0 0;
}

.tab-scene {
	width: 76px;
}

.tab-inspector {
	gap: 5px;
	width: 95px;
}

.tab-console {
	width: 86px;
}

.tab-game {
	gap: 3px;
	background: none;
}

.lock {
	width: 10px;
	height: 12px;
	margin-right: 10px;
}

.dots {
	width: 4px;
	height: 12px;
}

.scene-tools {
	display: flex;
	align-items: center;
	height: 26px;
	padding: 0 3px 0 6px;
	background-color: #3c3c3c;
}

.grip {
	width: 4px;
	height: 16px;
	margin-right: 6px;
	border: 1px solid #555;
	border-width: 0 1px;
}

.grip.second {
	margin-left: 6px;
}

.chip {
	gap: 1px;
	height: 20px;
	margin-right: 4px;
	padding: 0 5px 0 4px;
	border-radius: 3px;
	background-color: #585858;
}

.chip .caret {
	margin-left: 3px;
}

.split {
	display: flex;
	gap: 1px;
	margin-right: 4px;
}

.split button {
	justify-content: center;
	width: 22px;
	height: 20px;
	border-radius: 3px 0 0 3px;
	background-color: #585858;
}

.split button + button {
	width: 14px;
	border-radius: 0 3px 3px 0;
}

.split.on button {
	background-color: #46607c;
}

.scene-search {
	display: flex;
	align-items: center;
	align-self: flex-start;
	gap: 4px;
	width: 310px;
	height: 20px;
	padding: 0 4px;
	border: 1px solid #191919;
	border-radius: 4px 0 0 4px;
	background-color: #2a2a2a;
}

.scene-search input {
	flex: 1;
}

.scene-search input::placeholder {
	color: #707070;
}

.open-search {
	align-self: flex-start;
	justify-content: center;
	width: 16px;
	height: 20px;
}

.viewport {
	position: relative;
	flex: 1;
	min-height: 0;
	background-color: #6a625d;
}

.ground {
	width: 416px;
	height: 100%;
}

.tool-palette {
	position: absolute;
	top: 2px;
	left: 2px;
	display: flex;
	flex-direction: column;
	gap: 1px;
	width: 43px;
	padding: 0 3px 4px;
	border-radius: 3px;
	background-color: rgba(10, 12, 12, .9);
}

.tool-palette button {
	justify-content: center;
	height: 20px;
	background-color: #585858;
}

.tool-palette button.active {
	background-color: #46607c;
}

.tool-palette svg {
	width: 16px;
	height: 16px;
}

.handle {
	height: 4px;
	margin: 6px 11px 7px;
	border: 1px solid #555;
	border-width: 1px 0;
}

.console-tools {
	display: flex;
	flex-shrink: 0;
	height: 21px;
	border-bottom: 1px solid #232323;
	background-color: #3c3c3c;
}

.console-tools button {
	border-right: 1px solid #232323;
}

.console-tools .clear {
	width: 41px;
	padding-left: 4px;
}

.console-tools .clear-menu {
	justify-content: center;
	width: 17px;
}

.console-tools .collapse,
.console-tools .pause {
	padding: 0 5px;
}

.console-tools .attach {
	gap: 4px;
	padding: 0 4px 0 3px;
}

.log {
	flex: 1;
	border-bottom: 1px solid #232323;
}

.log-detail {
	height: 102px;
}

.project-tree {
	margin-right: -1px;
}

.project-grid {
	background-color: #333;
}

.project-grid footer {
	display: flex;
	align-items: center;
	justify-content: flex-end;
	height: 20px;
	padding-right: 16px;
	background-color: #404040;
}

.slider {
	height: 12px;
	appearance: none;
}

.slider::-webkit-slider-runnable-track {
	height: 2px;
	background-color: #5e5e5e;
}

.slider::-webkit-slider-thumb {
	width: 10px;
	height: 10px;
	margin-top: -4px;
	border-radius: 50%;
	background-color: #999;
	appearance: none;
}

.zoom {
	width: 56px;
}

.status-bar {
	display: flex;
	align-items: center;
	justify-content: flex-end;
	height: 23px;
	padding-right: 1px;
	background-color: #191919;
}

.status-bar button {
	justify-content: center;
	width: 26px;
	height: 20px;
	border-left: 1px solid #282828;
}

.status-bar svg {
	width: 15px;
	height: 15px;
}

/* Windows taskbar */
.taskbar {
	display: flex;
	height: 40px;
	background-color: #1c1c1c;
	color: #fff;
	font-family: 'Open Sans', 'Noto Sans', sans-serif;
}

.start {
	justify-content: center;
	width: 48px;
}

.task-search {
	display: flex;
	align-items: center;
	width: 288px;
	padding-left: 11px;
	border: 1px solid #5c5c5c;
	background-color: #303030;
}

.task-search input {
	flex: 1;
	margin-left: 11px;
	font-size: 14px;
}

.task-search input::placeholder {
	color: #d4d4d4;
}

.search-art {
	align-self: flex-end;
}

.task {
	justify-content: center;
	width: 48px;
	margin-right: 1px;
}

.task svg {
	width: 24px;
	height: 24px;
}

.task.running {
	border-top: 3px solid transparent;
	border-bottom: 3px solid #76b9ed;
	width: 40px;
	margin: 0 4px 0 5px;
}

.task.active {
	width: 46px;
	margin: 0 1px 0 2px;
	background-color: #4a4a4a;
	border-top-color: #4a4a4a;
}

.ps {
	width: 23px;
	height: 24px;
	border: 2px solid #8bc2f5;
	background-color: #0b0140;
	color: #9ad0ff;
	font-size: 12px;
	font-weight: 600;
	line-height: 19px;
	text-align: center;
}

.weather {
	gap: 9px;
	margin-right: 24px;
	font-size: 13px;
}

.tray {
	display: flex;
	align-items: center;
	gap: 8px;
}

.lang {
	margin-left: 2px;
	font-size: 12px;
}

.clock {
	display: flex;
	flex-direction: column;
	justify-content: center;
	width: 76px;
	font-size: 11px;
	line-height: 18px;
	text-align: center;
}

.notify {
	justify-content: center;
	width: 29px;
	margin-right: 12px;
}

.taskbar::after {
	content: '';
	width: 5px;
	border-left: 1px solid #6a6a6a;
}

/* Floating windows */
.window {
	position: absolute;
	display: flex;
	flex-direction: column;
	background-color: #383838;
	box-shadow: 0 2px 14px rgba(0, 0, 0, .55);
}

.titlebar {
	display: flex;
	align-items: center;
	gap: 6px;
	flex-shrink: 0;
	height: 30px;
	padding: 0 1px 2px 8px;
	color: #000;
	font-size: 11px;
}

.titlebar .win-buttons {
	color: #000;
}

.titlebar.inactive,
.titlebar.inactive .win-buttons {
	color: #999;
}

.build-window {
	top: 35px;
	left: 435px;
	width: 667px;
	height: 200px;
	border: 1px solid #888;
}

.build-window .tabstrip,
.project-window .tabstrip {
	height: 21px;
	padding-right: 10px;
}

.build-window .tab-build {
	align-self: flex-end;
	width: 98px;
	height: 19px;
	padding: 0 6px;
}

.build-window h2 {
	padding: 4px 13px;
	color: #c8c8c8;
	font-size: 13px;
	font-weight: 600;
	line-height: 18px;
}

.project-window {
	top: 109px;
	right: 395px;
	bottom: 210px;
	left: 416px;
}

.tab-project {
	align-self: flex-end;
	gap: 4px;
	width: 130px;
	height: 20px;
	padding: 0 7px;
	border-top: 2px solid #2c5d87;
	border-radius: 0;
}

.settings-search {
	display: flex;
	justify-content: flex-end;
	flex-shrink: 0;
	height: 21px;
	padding: 2px 3px;
	border-bottom: 1px solid #232323;
	background-color: #3c3c3c;
}

.settings-search label {
	display: flex;
	align-items: center;
	gap: 4px;
	width: 301px;
	height: 16px;
	padding: 0 4px;
	border: 1px solid #191919;
	border-radius: 4px;
	background-color: #2a2a2a;
}

.settings-search input {
	flex: 1;
}

.settings-body {
	display: flex;
	flex: 1;
	min-height: 0;
}

.categories {
	display: flex;
	flex-direction: column;
	flex-shrink: 0;
	width: 273px;
	padding-top: 4px;
	border-right: 1px solid #232323;
}

.categories a {
	padding-left: 17px;
	line-height: 16px;
}

.categories .selected {
	background-color: #4d4d4d;
}

.categories .parent {
	display: flex;
	align-items: center;
	gap: 4px;
	padding-left: 4px;
}

.categories .parent::before {
	content: '';
	border: 4px solid transparent;
	border-top: 7px solid #707070;
	border-bottom: 0;
}

.categories .child {
	padding-left: 31px;
}

.player {
	display: flex;
	flex-direction: column;
	flex: 1;
	min-width: 0;
}

.player-head {
	display: flex;
	align-items: center;
	gap: 8px;
	flex-shrink: 0;
	height: 24px;
	padding: 2px 10px 0 9px;
}

.player-head h1 {
	flex: 1;
	color: #d0d0d0;
	font-size: 20px;
	font-weight: 600;
	line-height: 22px;
}

.player-head .dots {
	margin-left: 4px;
}

.scroller {
	display: flex;
	flex: 1;
	min-height: 0;
}

.content {
	flex: 1;
	min-width: 0;
	padding: 0 2px 0 14px;
	overflow: hidden;
}

.texture {
	display: flex;
	align-items: flex-end;
	justify-content: flex-end;
	width: 64px;
	height: 31px;
	margin-left: auto;
	border: 1px solid #191919;
	border-top: 0;
	background-color: #303030;
}

.texture button {
	height: 12px;
	padding: 0 2px 0 3px;
	background-color: #4a4a4a;
	font-size: 10px;
}

.field {
	height: 18px;
	padding: 0 3px;
	border: 1px solid #191919;
	border-radius: 3px;
	background-color: #2a2a2a;
	color: #c4c4c4;
}

.hotspot {
	display: grid;
	grid-template-columns: 252px 15px 1fr 20px 1fr;
	align-items: center;
	margin-top: 2px;
}

.hotspot label[for="hot-y"] {
	padding-left: 6px;
}

.platforms {
	margin: 12px 1px 0 0;
	border: 1px solid #232323;
	border-radius: 3px;
	background-color: #404040;
}

.platform-tabs {
	display: grid;
	grid-template-columns: repeat(4, 1fr);
	height: 21px;
}

.platform-tabs button {
	justify-content: center;
	border-right: 1px solid #232323;
	border-bottom: 1px solid #232323;
	background-color: #353535;
}

.platform-tabs button:last-child {
	border-right: 0;
}

.platform-tabs .current {
	border-bottom: 0;
	background: none;
}

.platform-title {
	padding: 8px 6px 1px;
	line-height: 16px;
}

.foldout,
.foldout-open {
	width: auto;
	margin: 0 4px 2px;
	border: 1px solid #232323;
	border-radius: 3px;
	background-color: #464646;
}

.foldout {
	width: calc(100% - 8px);
	height: 27px;
}

.foldout,
.foldout-head {
	padding-left: 10px;
	color: #d0d0d0;
	font-size: 13px;
	font-weight: 700;
}

.foldout-head {
	width: 100%;
	height: 25px;
}

.arrow {
	width: 12px;
}

.arrow::before {
	content: '';
	display: block;
	width: 0;
	border: 4px solid transparent;
	border-left: 8px solid #757575;
	border-right: 0;
}

.arrow.down::before {
	border: 4px solid transparent;
	border-top: 8px solid #757575;
	border-bottom: 0;
}

.foldout-open h3 {
	padding-left: 7px;
	color: #c8c8c8;
	font-size: 13px;
	font-weight: 600;
	line-height: 18px;
}

.row {
	display: flex;
	align-items: center;
	height: 18px;
	margin-bottom: 2px;
	padding: 0 6px 0 22px;
}

.row label {
	flex-shrink: 0;
	width: 240px;
	color: #adadad;
}

.row .slider {
	flex: 1;
	margin-right: 5px;
}

.row .number {
	width: 50px;
}

.pick.wide {
	flex: 1;
	width: auto;
	margin-left: 0;
}

.pick.wide select {
	display: block;
	padding: 0 3px;
	border: 1px solid #303030;
	border-radius: 3px;
	background-color: #515151;
	color: #d0d0d0;
}

input[type="checkbox"] {
	display: grid;
	place-items: center;
	width: 14px;
	height: 14px;
	border: 1px solid #191919;
	border-radius: 2px;
	background-color: #2a2a2a;
	appearance: none;
}

input[type="checkbox"]:checked::before {
	content: '';
	width: 8px;
	height: 4px;
	margin-bottom: 2px;
	border: 2px solid #e0e0e0;
	border-width: 0 0 2px 2px;
	transform: rotate(-45deg);
}

.list {
	margin: 0 3px;
	border: 1px solid #232323;
	border-radius: 3px;
	background-color: #404040;
}

.list.spaced {
	margin-top: 8px;
}

.list h4 {
	padding-left: 6px;
	border-bottom: 1px solid #232323;
	background-color: #353535;
	color: #adadad;
	font-size: 12px;
	font-weight: 400;
	line-height: 18px;
}

.item {
	display: flex;
	align-items: center;
	gap: 6px;
	height: 25px;
	padding-left: 5px;
	color: #adadad;
}

.drag {
	width: 10px;
	height: 5px;
	border: 1px solid #666;
	border-width: 1px 0;
}

.list-footer {
	position: relative;
	display: flex;
	gap: 14px;
	width: 58px;
	height: 20px;
	margin: -1px 13px 3px auto;
	padding-left: 8px;
	border: 1px solid #232323;
	border-top: 0;
	border-radius: 0 0 3px 3px;
	background-color: #404040;
}

.minus {
	width: 8px;
	height: 2px;
	background-color: #d0d0d0;
}

button:disabled .minus {
	background-color: #808080;
}

.scrollbar {
	display: flex;
	flex-direction: column;
	align-items: center;
	width: 15px;
	padding: 5px 0;
	border-left: 1px solid #303030;
	background-color: #353535;
}

.scrollbar .up,
.scrollbar .end {
	border: 4px solid transparent;
}

.scrollbar .up {
	border-top: 0;
	border-bottom: 5px solid #c4c4c4;
}

.scrollbar .end {
	border-top: 5px solid #c4c4c4;
	border-bottom: 0;
}

.track {
	flex: 1;
	padding-top: 43px;
}

.thumb {
	display: block;
	width: 10px;
	height: 155px;
	border-radius: 5px;
	background-color: #5e5e5e;
}

/* Annotations */
.arrows {
	position: absolute;
	inset: 0;
	width: 100%;
	height: 100%;
	pointer-events: none;
}

.caption {
	position: absolute;
	top: 243px;
	right: 0;
	width: 412px;
	color: #fff;
	font-family: 'Liberation Serif', serif;
	font-size: 52px;
	line-height: 58px;
	text-align: center;
	white-space: nowrap;
}
```
